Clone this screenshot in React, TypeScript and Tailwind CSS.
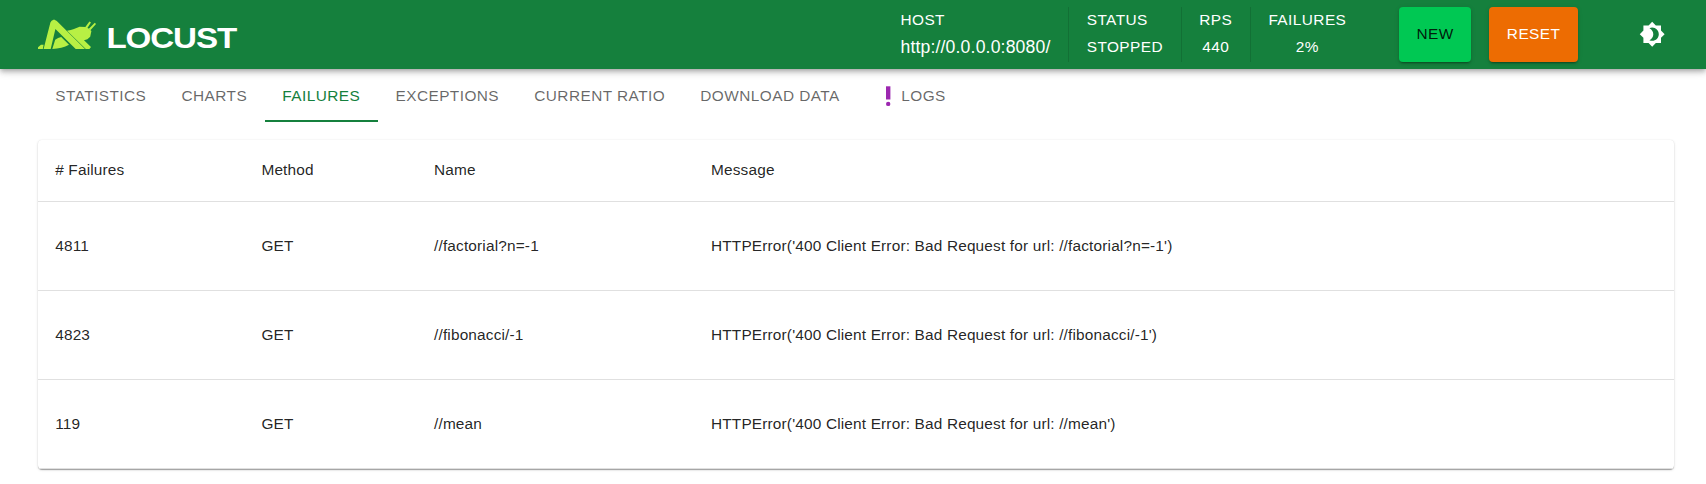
import type { ReactNode } from "react";

const tabs = ["Statistics", "Charts", "Failures", "Exceptions", "Current Ratio", "Download Data", "Logs"];

const failures = [
  { count: 4811, method: "GET", name: "//factorial?n=-1", message: "HTTPError('400 Client Error: Bad Request for url: //factorial?n=-1')" },
  { count: 4823, method: "GET", name: "//fibonacci/-1", message: "HTTPError('400 Client Error: Bad Request for url: //fibonacci/-1')" },
  { count: 119, method: "GET", name: "//mean", message: "HTTPError('400 Client Error: Bad Request for url: //mean')" },
];

function Logo() {
  return (
    <svg width="204" height="39" viewBox="0 0 204 39" aria-label="Locust" className="block">
      <g fill="#b8f044" transform="translate(0 -0.5)">
        <path d="M0 32.8 3 30.2H5.6L4.8 34.5H0z" />
        <path d="M5.6 34.5 12.4 8 13.6 6.2 16 5.1 18.8 6.6 47 34.5H37.7L17.4 14.6 12.7 34.5z" />
        <path d="M14.3 34.5 17.2 25.2Q20 22.8 23.2 22.4L31 30.2Q24 34 14.3 34.5z" />
        <path d="M29 16.2Q33 15.4 36 14.4L41.6 12.2 47.6 12.6 51 14.2 53.4 16.6 52.2 22.2 49.4 24.8 46 25.8 53 32.4 51.4 34.5H47.8z" />
        <path d="M46.8 13.2 51.4 7 53 8 49.2 13.8zM50.6 14.6 56.8 8.2 58 9.4 52.4 15.8z" />
      </g>
      <text transform="translate(68.4 33.1) scale(1.105 1)" fill="#fff" fontSize="30" fontWeight="700" letterSpacing="-1" fontFamily="Liberation Sans, Arial, sans-serif">LOCUST</text>
    </svg>
  );
}

function Stat({ label, children, className = "items-center" }: { label: string; children: ReactNode; className?: string }) {
  return (
    <div className={`flex h-[55px] flex-col whitespace-nowrap ${className}`}>
      <span className="leading-[26px]">{label}</span>
      <span className="leading-[28px]">{children}</span>
    </div>
  );
}

function Divider() {
  return <div className="mx-[17.6px] h-[55px] w-px bg-black/12" />;
}

export default function App() {
  return (
    <div className="h-[484px] overflow-hidden bg-white font-['Liberation_Sans',Arial,sans-serif] text-[15.4px] text-black/87">
      <header className="relative flex h-[69px] items-center bg-[#15803d] pr-[40.5px] pl-[38px] tracking-[0.02857em] text-white shadow-[0_2px_4px_-1px_rgba(0,0,0,0.2),0_4px_5px_0_rgba(0,0,0,0.14),0_1px_11px_0_rgba(0,0,0,0.12)]">
        <Logo />
        <div className="ml-auto flex items-center">
          <div className="flex h-[55px] flex-col items-start whitespace-nowrap">
            <span className="leading-[26px]">HOST</span>
            <span className="text-[17.6px] leading-[28px] tracking-[0.00938em]">http://0.0.0.0:8080/</span>
          </div>
          <Divider />
          <Stat label="STATUS" className="items-start">STOPPED</Stat>
          <Divider />
          <Stat label="RPS">440</Stat>
          <Divider />
          <Stat label="FAILURES">2%</Stat>
          <button className="ml-[52.8px] h-[55px] w-[72px] rounded bg-[#00c853] pb-[2px] text-black/87 shadow-[0_3px_1px_-2px_rgba(0,0,0,0.2),0_2px_2px_0_rgba(0,0,0,0.14),0_1px_5px_0_rgba(0,0,0,0.12)]">NEW</button>
          <button className="ml-[18px] h-[55px] w-[89px] rounded bg-[#ed6c02] pb-[2px] text-white shadow-[0_3px_1px_-2px_rgba(0,0,0,0.2),0_2px_2px_0_rgba(0,0,0,0.14),0_1px_5px_0_rgba(0,0,0,0.12)]">RESET</button>
          <button className="ml-[61px] block" aria-label="Toggle theme">
            <svg className="block size-[26.4px]" viewBox="0 0 24 24" fill="#fff">
              <path d="M20 8.69V4h-4.69L12 .69 8.69 4H4v4.69L.69 12 4 15.31V20h4.69L12 23.31 15.31 20H20v-4.69L23.31 12zM12 18c-.89 0-1.74-.2-2.5-.55C11.56 16.5 13 14.42 13 12s-1.44-4.5-3.5-5.45C10.26 6.2 11.11 6 12 6c3.31 0 6 2.69 6 6s-2.69 6-6 6" />
            </svg>
          </button>
        </div>
      </header>

      <nav className="flex h-[53px] pl-[37.7px] tracking-[0.02857em]">
        {tabs.map((tab) => (
          <button
            key={tab}
            className={`flex h-[53px] items-center border-b-2 px-[17.6px] pt-[2px] whitespace-nowrap uppercase ${tab === "Failures" ? "border-[#15803d] text-[#15803d]" : "border-transparent text-black/60"}`}
          >
            {tab === "Logs" && (
              <svg className="mt-px size-[26.4px]" viewBox="0 0 24 24" fill="#9c27b0">
                <circle cx="12" cy="19" r="2" />
                <path d="M10 3h4v12h-4z" />
              </svg>
            )}
            {tab}
          </button>
        ))}
      </nav>

      <main className="mt-[18px] mr-[32px] ml-[38px] rounded shadow-[0_2px_1px_-1px_rgba(0,0,0,0.2),0_1px_1px_0_rgba(0,0,0,0.14),0_1px_3px_0_rgba(0,0,0,0.12),0_0_1px_0_rgba(0,0,0,0.12)]">
        <table className="w-full table-fixed border-separate border-spacing-0 text-left tracking-[0.01071em]">
          <thead>
            <tr className="h-[62px]">
              <th className="w-[206px] border-b border-[#e0e0e0] pb-[2px] pl-[17.2px] font-normal"># Failures</th>
              <th className="w-[173px] border-b border-[#e0e0e0] pb-[2px] pl-[17.4px] font-normal">Method</th>
              <th className="w-[277px] border-b border-[#e0e0e0] pb-[2px] pl-[17px] font-normal">Name</th>
              <th className="border-b border-[#e0e0e0] pb-[2px] pl-[17px] font-normal">Message</th>
            </tr>
          </thead>
          <tbody>
            {failures.map((row) => (
              <tr key={row.name} className="h-[89px]">
                <td className="border-b border-[#e0e0e0] pl-[17.2px]">{row.count}</td>
                <td className="border-b border-[#e0e0e0] pl-[17.4px]">{row.method}</td>
                <td className="border-b border-[#e0e0e0] pl-[17px]">{row.name}</td>
                <td className="border-b border-[#e0e0e0] pl-[17px]">{row.message}</td>
              </tr>
            ))}
          </tbody>
        </table>
      </main>
    </div>
  );
}
